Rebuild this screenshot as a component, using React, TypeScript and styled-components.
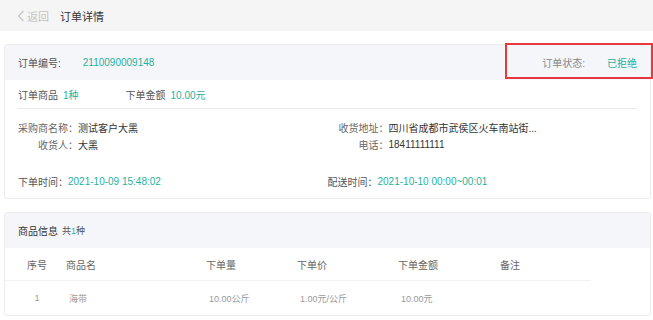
import styled, { createGlobalStyle } from "styled-components";

const GlobalStyle = createGlobalStyle`
  * { box-sizing: border-box; }
  body {
    margin: 0;
    background: #fff;
    font-family: "Liberation Sans", "Noto Sans CJK SC", sans-serif;
    font-size: 10px;
    color: #333;
    overflow: hidden;
  }
  p { margin: 0; }
`;

const columns = [
  { title: "序号", key: "no" },
  { title: "商品名", key: "name" },
  { title: "下单量", key: "qty" },
  { title: "下单价", key: "price" },
  { title: "下单金额", key: "amount" },
  { title: "备注", key: "remark" },
];

const goods = [
  { no: "1", name: "海带", qty: "10.00公斤", price: "1.00元/公斤", amount: "10.00元", remark: "" },
];

function App() {
  return (
    <Page>
      <GlobalStyle />
      <TopBar>
        <Back>
          <svg width="8" height="12" viewBox="0 0 8 12">
            <polyline points="6.5,1 1.5,6 6.5,11" fill="none" stroke="#c4c4c4" strokeWidth="1.2" />
          </svg>
          返回
        </Back>
        <PageTitle>订单详情</PageTitle>
      </TopBar>

      <Card>
        <CardHead>
          <HeadPair>
            <Label>订单编号:</Label>
            <Green>2110090009148</Green>
          </HeadPair>
          <HeadPair $status>
            <Label $light>订单状态:</Label>
            <Green>已拒绝</Green>
          </HeadPair>
          <Highlight />
        </CardHead>

        <CardBody>
          <Summary>
            <Inline>
              <Label>订单商品</Label>
              <Green>1种</Green>
            </Inline>
            <Inline>
              <Label>下单金额</Label>
              <Green>10.00元</Green>
            </Inline>
          </Summary>

          <InfoGrid>
            <InfoItem>
              <InfoLabel>采购商名称：</InfoLabel>
              <Value>测试客户大黑</Value>
            </InfoItem>
            <InfoItem>
              <InfoLabel>收货地址：</InfoLabel>
              <Value>四川省成都市武侯区火车南站街...</Value>
            </InfoItem>
            <InfoItem>
              <InfoLabel>收货人：</InfoLabel>
              <Value>大黑</Value>
            </InfoItem>
            <InfoItem>
              <InfoLabel>电话：</InfoLabel>
              <Value>18411111111</Value>
            </InfoItem>
          </InfoGrid>

          <TimeRow>
            <Inline $tight>
              <Label>下单时间：</Label>
              <Green>2021-10-09 15:48:02</Green>
            </Inline>
            <Inline $tight>
              <Label>配送时间：</Label>
              <Green>2021-10-10 00:00~00:01</Green>
            </Inline>
          </TimeRow>
        </CardBody>
      </Card>

      <Card>
        <CardHead>
          <HeadPair $section>
            <SectionTitle>商品信息</SectionTitle>
            <Count>
              共<Green>1</Green>种
            </Count>
          </HeadPair>
        </CardHead>
        <Table>
          <TableRow $head>
            {columns.map((c) => (
              <Cell key={c.key} $head $center={c.key === "no"}>
                {c.title}
              </Cell>
            ))}
          </TableRow>
          {goods.map((g) => (
            <TableRow key={g.no}>
              {columns.map((c) => (
                <Cell key={c.key} $center={c.key === "no"}>
                  {g[c.key as keyof typeof g]}
                </Cell>
              ))}
            </TableRow>
          ))}
        </Table>
      </Card>
    </Page>
  );
}

export default App;

const Page = styled.div`
  width: 653px;
  display: flex;
  flex-direction: column;
  row-gap: 13px;
  & > * {
    flex-shrink: 0;
  }
`;

const TopBar = styled.div`
  height: 31px;
  background: #f5f5f5;
  display: flex;
  align-items: center;
  padding-left: 17px;
  column-gap: 11px;
  font-size: 11px;
`;

const Back = styled.div`
  display: flex;
  align-items: center;
  column-gap: 2px;
  color: #c4c4c4;
`;

const PageTitle = styled.p`
  color: #333;
`;

const Card = styled.div`
  margin: 0 2px 0 4px;
  border: 1px solid #ececec;
  border-radius: 3px;
  background: #fff;
`;

const CardHead = styled.div`
  position: relative;
  height: 35px;
  background: #f5f6fa;
  display: flex;
  align-items: center;
  justify-content: space-between;
  padding: 0 13px;
`;

const HeadPair = styled.div<{ $status?: boolean; $section?: boolean }>`
  display: flex;
  align-items: center;
  column-gap: ${(p) => (p.$section ? "4px" : "22px")};
`;

const Highlight = styled.div`
  position: absolute;
  left: 500px;
  right: -3px;
  top: -2px;
  bottom: 1px;
  border: 2px solid #e8383d;
  pointer-events: none;
`;

const Label = styled.span<{ $light?: boolean }>`
  color: ${(p) => (p.$light ? "#888" : "#555")};
  white-space: nowrap;
`;

const Green = styled.span`
  color: #1fb19e;
`;

const Value = styled.span`
  color: #333;
  white-space: nowrap;
`;

const CardBody = styled.div`
  padding: 0 13px;
`;

const Summary = styled.div`
  display: flex;
  align-items: center;
  column-gap: 47px;
  height: 29px;
  border-bottom: 1px solid #e8e8e8;
`;

const Inline = styled.div<{ $tight?: boolean }>`
  display: flex;
  align-items: center;
  column-gap: ${(p) => (p.$tight ? "0" : "5px")};
`;

const InfoGrid = styled.div`
  display: grid;
  grid-template-columns: 1fr 1fr;
  align-content: start;
  row-gap: 4px;
  padding-top: 12px;
  height: 56px;
`;

const InfoItem = styled.div`
  display: flex;
  align-items: center;
  height: 13px;
  &:nth-child(even) {
    padding-left: 1px;
  }
`;

const InfoLabel = styled.span`
  width: 60px;
  flex-shrink: 0;
  white-space: nowrap;
  text-align: right;
  color: #666;
`;

const TimeRow = styled.div`
  display: grid;
  grid-template-columns: 1fr 1fr;
  height: 33px;
  align-items: center;
`;

const SectionTitle = styled.span`
  color: #333;
`;

const Count = styled.span`
  color: #555;
  font-size: 9px;
`;

const Table = styled.div`
  display: flex;
  flex-direction: column;
  width: 586px;
`;

const TableRow = styled.div<{ $head?: boolean }>`
  display: grid;
  grid-template-columns: 48px 140px 91px 101px 102px 90px;
  height: ${(p) => (p.$head ? "33px" : "34px")};
  align-items: center;
  padding-left: 13px;
  border-bottom: ${(p) => (p.$head ? "1px solid #f2f2f2" : "none")};
`;

const Cell = styled.div<{ $head?: boolean; $center?: boolean }>`
  color: ${(p) => (p.$head ? "#666" : "#999")};
  font-size: ${(p) => (p.$head ? "10px" : "9px")};
  white-space: nowrap;
  text-align: ${(p) => (p.$center ? "center" : "left")};
  padding-left: ${(p) => (p.$center || p.$head ? "0" : "3px")};
  padding-right: ${(p) => (p.$center ? "10px" : "0")};
`;
